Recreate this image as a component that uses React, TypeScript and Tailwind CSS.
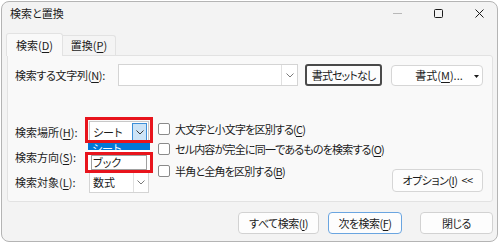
import React from 'react';

const U = ({ children }: { children: React.ReactNode }) => (
  <span className="underline decoration-[1px] underline-offset-[2px]">{children}</span>
);

const Chevron = ({ color = '#7a7a7a' }: { color?: string }) => (
  <svg width="8" height="5" viewBox="0 0 8 5" fill="none">
    <path d="M0.5 0.5 L4 4 L7.5 0.5" stroke={color} strokeWidth="1" />
  </svg>
);

const Checkbox = ({ children }: { children: React.ReactNode }) => (
  <div className="flex items-center h-[20px]">
    <div className="w-[12px] h-[12px] rounded-[2px] border border-[#8a8a8a] bg-white" />
    <span className="ml-[5px] whitespace-nowrap tracking-[-0.8px]">{children}</span>
  </div>
);

const Button = ({ className, children }: { className: string; children: React.ReactNode }) => (
  <div
    className={`flex items-center justify-center h-[22px] rounded-[4px] bg-[#fdfdfd] border tracking-[-0.5px] ${className}`}
  >
    {children}
  </div>
);

export default function App() {
  return (
    <div className="w-[500px] h-[243px] bg-white overflow-hidden text-[11px] leading-none text-[#1b1b1b] font-['Noto_Sans_CJK_JP','Noto_Sans',sans-serif] [font-feature-settings:'palt']">
      <div className="ml-[1px] mt-[1px] w-[497px] h-[241px] rounded-[8px] border border-[#b4b4b4] bg-[#f3f3f3] flex flex-col overflow-hidden">
        {/* title bar */}
        <div className="flex items-center h-[22px] pl-[8px]">
          <span>検索と置換</span>
          <div className="ml-auto flex items-center gap-[32px] pr-[13px]">
            <svg width="9" height="9" viewBox="0 0 9 9">
              <path d="M0 4.5 H9" stroke="#b8b8b8" strokeWidth="1" />
            </svg>
            <svg width="9" height="9" viewBox="0 0 9 9" fill="none">
              <rect x="0.5" y="0.5" width="8" height="8" rx="1" stroke="#1b1b1b" strokeWidth="1" />
            </svg>
            <svg width="9" height="9" viewBox="0 0 9 9" fill="none">
              <path d="M0.5 0.5 L8.5 8.5 M8.5 0.5 L0.5 8.5" stroke="#1b1b1b" strokeWidth="1" />
            </svg>
          </div>
        </div>

        {/* tabs */}
        <div className="flex items-end h-[22px] mt-[9px] pl-[4px] relative z-10">
          <div className="flex items-center justify-center w-[57px] h-[23px] mb-[-1px] bg-[#f9f9f9] border border-b-0 border-[#e2e2e2] rounded-t-[3px]">
            検索(<U>D</U>)
          </div>
          <div className="flex items-center justify-center w-[53px] h-[20px] bg-[#f4f4f4] border border-b-0 border-l-0 border-[#e2e2e2] rounded-tr-[3px]">
            置換(<U>P</U>)
          </div>
        </div>

        {/* panel */}
        <div className="ml-[5px] w-[486px] h-[147px] flex flex-col bg-[#f9f9f9] border border-[#e2e2e2] rounded-b-[3px] rounded-tr-[3px]">
          <div className="flex items-center h-[22px] mt-[8px] pl-[7px]">
            <span className="w-[103px] tracking-[-0.3px]">
              検索する文字列(<U>N</U>):
            </span>
            <div className="flex w-[180px] h-[22px] bg-white border border-[#d4d4d4]">
              <div className="flex-1" />
              <div className="w-[16px] flex items-center justify-center border-l border-[#e0e0e0]">
                <Chevron />
              </div>
            </div>
            <div className="ml-[7px] flex items-center justify-center w-[77px] h-[22px] rounded-[3px] bg-[#fdfdfd] border-2 border-[#4a4a4a] tracking-[-0.9px]">
              書式セットなし
            </div>
            <div className="ml-[9px] relative flex items-center justify-center w-[92px] h-[21px] rounded-[4px] bg-white border border-[#d6d6d6]">
              <span className="ml-[4px]">
                書式(<U>M</U>)...
              </span>
              <svg className="absolute right-[3px] top-[9px]" width="5" height="3" viewBox="0 0 5 3">
                <path d="M0 0 H5 L2.5 3 Z" fill="#1b1b1b" />
              </svg>
            </div>
          </div>

          <div className="flex-1 flex items-start">
            {/* labels + selects */}
            <div className="flex flex-col gap-[3px] mt-[35px] pl-[7px]">
              <div className="flex items-center h-[22px]">
                <span className="w-[74px]">
                  検索場所(<U>H</U>):
                </span>
                <div className="relative w-[60px] h-[22px]">
                  <div className="w-full h-full bg-white border border-[#c8c8c8] flex items-center pl-[3px]">
                    <span className="flex-1">シート</span>
                    <div className="w-[15px] h-[19px] mr-[1px] flex items-center justify-center bg-[#cce4f7] border border-[#3c8fd8]">
                      <Chevron color="#3a3a3a" />
                    </div>
                  </div>
                  <div className="absolute left-[-1px] top-[22px] w-[62px] z-10">
                    <div className="h-[7px] overflow-hidden bg-[#0078d7] text-white pl-[4px]">
                      <div className="h-[11px] leading-[11px]">シート</div>
                    </div>
                    <div className="h-[2px] bg-white" />
                    <div className="h-[21px] bg-white p-[3px]">
                      <div className="h-full border border-[#a0a0a0] flex items-center pl-[1px]">ブック</div>
                    </div>
                  </div>
                  <div className="absolute left-[-4px] top-[-4px] w-[68px] h-[26px] border-[3px] border-[#e8141c] z-20" />
                  <div className="absolute left-[-4px] top-[31px] w-[68px] h-[21px] border-[3px] border-[#e8141c] z-20" />
                </div>
              </div>
              <div className="flex items-center h-[22px]">
                <span className="w-[74px]">
                  検索方向(<U>S</U>):
                </span>
              </div>
              <div className="flex items-center h-[22px]">
                <span className="w-[74px]">
                  検索対象(<U>L</U>):
                </span>
                <div className="w-[60px] h-[21px] bg-white border border-[#d4d4d4] flex items-center pl-[3px]">
                  <span className="flex-1">数式</span>
                  <div className="w-[15px] h-full flex items-center justify-center border-l border-[#e0e0e0]">
                    <Chevron />
                  </div>
                </div>
              </div>
            </div>

            {/* checkboxes */}
            <div className="flex flex-col mt-[33px] ml-[9px]">
              <Checkbox>
                大文字と小文字を区別する(<U>C</U>)
              </Checkbox>
              <Checkbox>
                セル内容が完全に同一であるものを検索する(<U>O</U>)
              </Checkbox>
              <div className="mt-[2px]">
                <Checkbox>
                  半角と全角を区別する(<U>B</U>)
                </Checkbox>
              </div>
            </div>

            <div className="ml-auto self-end mb-[9px] mr-[9px]">
              <Button className="w-[91px] h-[23px] border-[#d6d6d6]">
                オプション(<U>I</U>)&nbsp;&nbsp;&lt;&lt;
              </Button>
            </div>
          </div>
        </div>

        {/* bottom buttons */}
        <div className="flex justify-end mt-[10px] pr-[4px]">
          <Button className="w-[81px] border-[#d2d2d2]">
            すべて検索(<U>I</U>)
          </Button>
          <Button className="ml-[9px] w-[74px] border-[#6aa5e0]">
            次を検索(<U>F</U>)
          </Button>
          <Button className="ml-[18px] w-[73px] border-[#d2d2d2]">閉じる</Button>
        </div>
      </div>
    </div>
  );
}
